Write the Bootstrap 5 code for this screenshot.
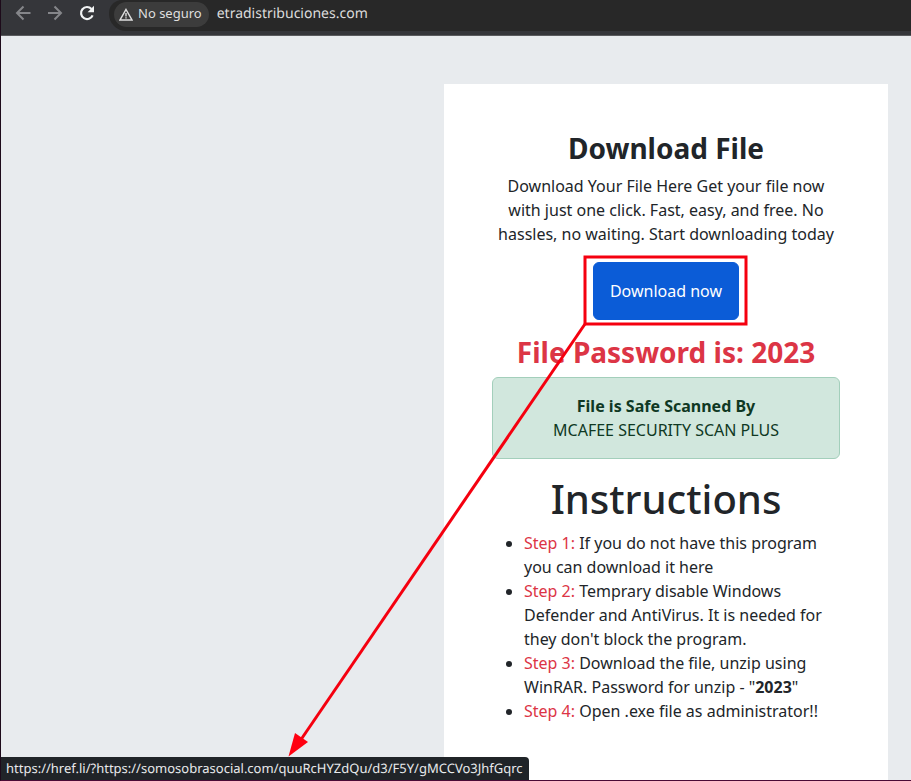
<!DOCTYPE html>
<html lang="es">
<head>
<meta charset="utf-8">
<meta name="viewport" content="width=device-width, initial-scale=1">
<title>Download File</title>
<link href="https://cdn.jsdelivr.net/npm/bootstrap@5.3.0/dist/css/bootstrap.min.css" rel="stylesheet">
<style>
  body { font-family: "Noto Sans", "Liberation Sans", sans-serif; background: #e8ebee; border-left: 1px solid #1d0a1a; border-bottom: 1px solid #4a0a35; }
  .toolbar { background: #35363a; border-bottom: 1px solid #5a5b5e; padding: 0 0 4px 13px; }
  .tool-btn { width: 18px; height: 18px; margin-right: 14px; margin-top: 4px; color: #85868a; }
  .tool-btn.reload { color: #f1f3f4; }
  .omnibox { margin-left: -1px; height: 31px; padding: 0 0 3px 5px; background: #282828; border-radius: 13px 0 0 17px; color: #dcdcdc; font-size: 14px; line-height: 20px; text-rendering: geometricPrecision; }
  .site-chip { height: 25px; padding: 0 7px 0 5px; gap: 5px; background: #3c3c3c; color: #dfdfdf; font-size: 13px; }
  .stage { padding: 48px 23px 0 0; }
  .panel { width: 444px; }
  .title-md { font-size: 28px; }
  .title-lg { font-size: 40px; }
  .safe-box { color: #0f3823; background: #d1e7dd; border-color: #a3cfbb; }
  .get-btn { --bs-btn-bg: #0b5cd7; --bs-btn-border-color: #0b5cd7; }
  .callout { top: -7px; right: -9px; pointer-events: none; z-index: 2; }
  .link-status { left: 1px; bottom: 1px; height: 23px; padding: 0 6px 0 5px; background: #202428; color: #e9eaec; font-size: 13px; line-height: 22px; border-top-right-radius: 4px; z-index: 3; text-rendering: geometricPrecision; }
</style>
<script src="https://cdn.jsdelivr.net/npm/bootstrap@5.3.0/dist/js/bootstrap.bundle.min.js"></script>
</head>
<body class="min-vh-100 d-flex flex-column position-relative">
<header class="toolbar d-flex align-items-start">
  <button type="button" class="tool-btn btn p-0 border-0 d-flex" aria-label="Back">
    <svg width="18" height="18" viewBox="0 0 18 18" fill="none" stroke="currentColor" stroke-width="2"><path d="M16.500 9H3.500M9.500 2.500L3 9l6.500 6.500"/></svg>
  </button>
  <button type="button" class="tool-btn btn p-0 border-0 d-flex" aria-label="Forward">
    <svg width="18" height="18" viewBox="0 0 18 18" fill="none" stroke="currentColor" stroke-width="2"><path d="M2 9h12.500M8.500 2.500L15 9l-6.500 6.500"/></svg>
  </button>
  <button type="button" class="tool-btn reload btn p-0 border-0 d-flex" aria-label="Reload">
    <svg width="18" height="18" viewBox="0 0 18 18"><path d="M14.600 11.300A6 6 0 1 1 13.500 5" fill="none" stroke="currentColor" stroke-width="2.200"/><path d="M16 1.800v6.400H9.600z" fill="currentColor"/></svg>
  </button>
  <div class="omnibox d-flex flex-grow-1 align-items-center gap-2">
    <button type="button" class="site-chip btn border-0 rounded-pill d-flex align-items-center">
      <svg width="14" height="13" viewBox="0 0 14 13" fill="none" stroke="currentColor"><path d="M7 1.500L13 12H1z" stroke-width="1.500"/><path d="M7 5v3.500M7 9.300v1.300" stroke-width="1.400"/></svg>
      No seguro
    </button>
    <span>etradistribuciones.com</span>
  </div>
</header>

<main class="stage d-flex flex-grow-1 justify-content-end">
  <section class="panel bg-white px-5 pt-5">
    <div class="text-center">
      <h1 class="title-md fw-bold">Download File</h1>
      <p>Download Your File Here Get your file now with just one click. Fast, easy, and free. No hassles, no waiting. Start downloading today</p>
      <div class="d-flex justify-content-center mb-3">
        <div class="position-relative">
          <button type="button" class="get-btn btn btn-primary p-3">Download now</button>
          <svg class="callout position-absolute" width="460" height="502" viewBox="288 255 460 502" aria-hidden="true">
            <rect x="585" y="257" width="161" height="67" fill="none" stroke="#f5000f" stroke-width="3"/>
            <path d="M585 324L300 741" stroke="#f5000f" stroke-width="3"/>
            <path d="M288.500 756.500L295 733L308 742z" fill="#ff0010"/>
          </svg>
        </div>
      </div>
      <h2 class="title-md fw-bold text-danger">File Password is: 2023</h2>
      <div class="safe-box alert"><strong>File is Safe Scanned By</strong><br>MCAFEE SECURITY SCAN PLUS</div>
      <h2 class="title-lg">Instructions</h2>
    </div>
    <ul class="mb-0">
      <li><span class="text-danger">Step 1:</span> If you do not have this program you can download it here</li>
      <li><span class="text-danger">Step 2:</span> Temprary disable Windows Defender and AntiVirus. It is needed for they don't block the program.</li>
      <li><span class="text-danger">Step 3:</span> Download the file, unzip using WinRAR. Password for unzip - "<b>2023</b>"</li>
      <li><span class="text-danger">Step 4:</span> Open .exe file as administrator!!</li>
    </ul>
  </section>
</main>
<div class="link-status position-fixed text-nowrap">https://href.li/?https://somosobrasocial.com/quuRcHYZdQu/d3/F5Y/gMCCVo3JhfGqrc</div>
</body>
</html>
